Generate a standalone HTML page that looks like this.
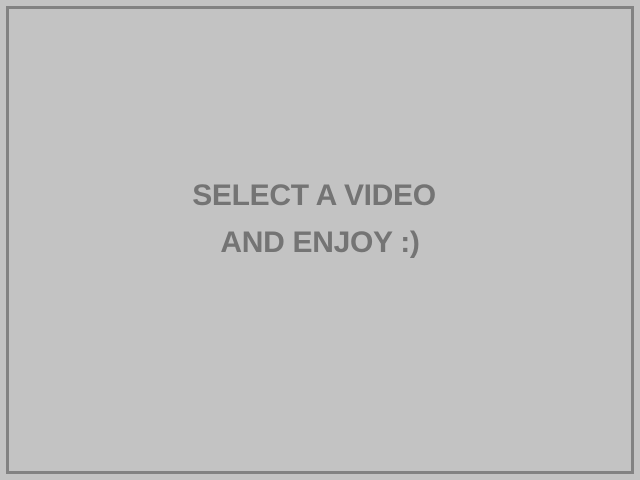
<!DOCTYPE html>
<html><head><style>
html,body{margin:0;padding:0;width:640px;height:480px;background:#c3c3c3;overflow:hidden}
.box{position:absolute;left:6px;top:6px;width:628px;height:468px;box-sizing:border-box;border:3px solid #828282}
.t{position:absolute;text-align:center;font-family:"Liberation Sans",sans-serif;font-weight:bold;font-size:30px;color:#747474;line-height:40px;letter-spacing:-0.3px;white-space:nowrap}
</style></head><body>
<div class="box"></div>
<div class="t" style="left:14px;width:600px;top:176px">SELECT A VIDEO</div>
<div class="t" style="left:20px;width:600px;top:223px">AND ENJOY :)</div>
</body></html>
